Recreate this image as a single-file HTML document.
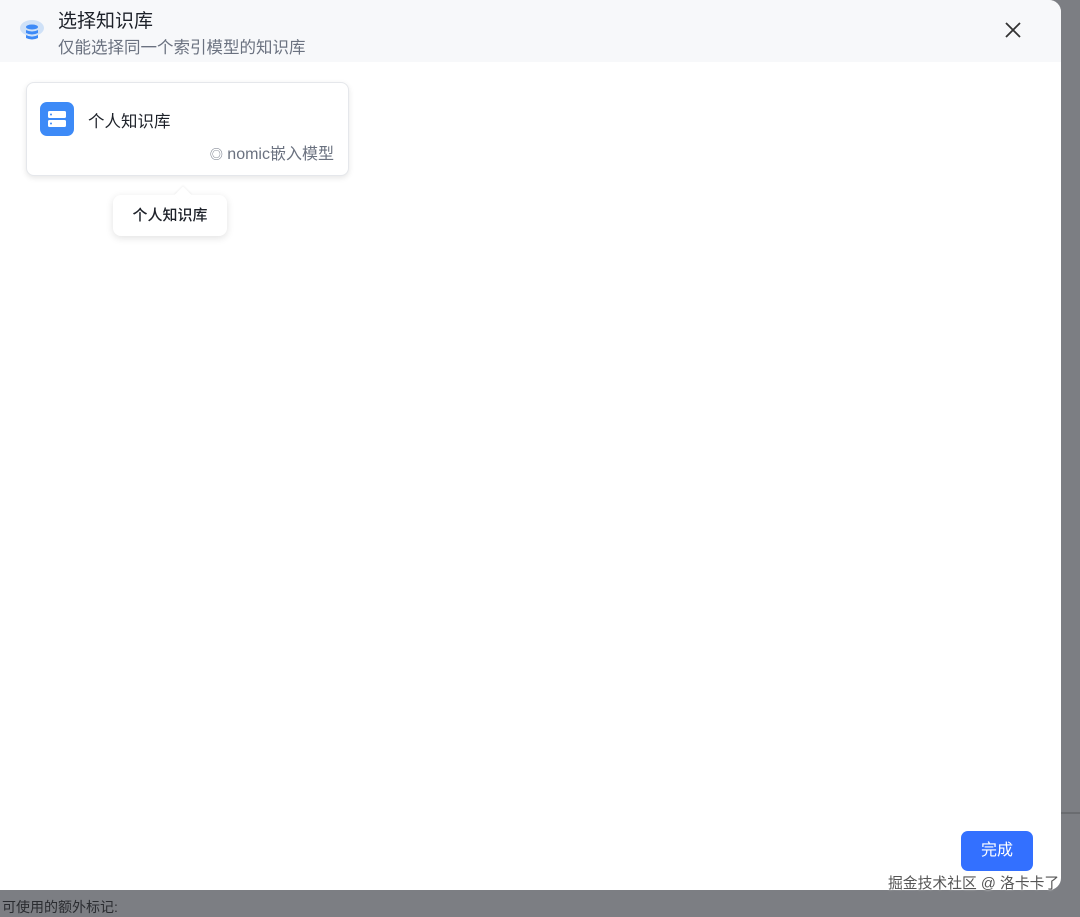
<!DOCTYPE html>
<html><head><meta charset="utf-8"><style>
*{margin:0;padding:0;box-sizing:border-box}
body{width:1080px;height:912px;background:#7c7e83;position:relative;overflow:hidden;font-family:"Liberation Sans","Noto Sans CJK SC",sans-serif}
.modal{position:absolute;left:0;top:0;width:1061px;height:890px;background:#fff;border-radius:0 12px 12px 0;overflow:hidden}
.hdr{position:absolute;left:0;top:0;width:100%;height:62px;background:#f7f8fa}
.t1{position:absolute;left:58px;top:6px;font-size:19px;color:#1d2129}
.t2{position:absolute;left:58px;top:34px;font-size:16.5px;color:#6b7280}
.card{position:absolute;left:26px;top:82px;width:323px;height:94px;border:1px solid #e5e7eb;border-radius:8px;box-shadow:0 2px 6px rgba(0,0,0,.1);background:#fff}
.ic{position:absolute;left:13px;top:19px;width:34px;height:34px;border-radius:7px;background:#3d8af7}
.name{position:absolute;left:61px;top:25px;font-size:16.5px;color:#1d2129}
.model{position:absolute;right:14px;top:57px;font-size:16px;color:#6b7280}
.tip{position:absolute;left:113px;top:195px;width:114px;height:41px;background:#fff;border-radius:8px;box-shadow:0 2px 8px rgba(0,0,0,.12);font-size:15px;color:#1d2129;text-align:center;line-height:41px;font-weight:500}
.tip:before{content:"";position:absolute;left:64px;top:-6px;width:12px;height:12px;background:#fff;transform:rotate(45deg);box-shadow:-1px -1px 2px rgba(0,0,0,.05)}
.btn{position:absolute;left:961px;top:831px;width:72px;height:40px;background:#3370ff;border-radius:7px;color:#fff;font-size:16px;text-align:center;line-height:40px}
.wm{position:absolute;left:888px;top:872px;font-size:14.8px;color:#555;text-shadow:0 0 2px #fff;white-space:nowrap}
.bot{position:absolute;left:2px;top:897px;font-size:14px;color:#2a2c30}
</style></head><body>
<div class="modal">
<div class="hdr">
<svg style="position:absolute;left:19px;top:18px" width="26" height="24" viewBox="0 0 26 24"><ellipse cx="13" cy="10" rx="12" ry="8" fill="#cfe1f7"/><ellipse cx="13" cy="9" rx="6" ry="2.5" fill="#3d8af7"/><path d="M7 12q6 3 12 0v3q-6 3-12 0z" fill="#3d8af7"/><path d="M7 17q6 3 12 0v3q-6 3-12 0z" fill="#3d8af7"/></svg>
<div class="t1">选择知识库</div>
<div class="t2">仅能选择同一个索引模型的知识库</div>
<svg style="position:absolute;left:1005px;top:22px" width="16" height="16" viewBox="0 0 16 16"><path d="M1 1L15 15M15 1L1 15" stroke="#333" stroke-width="1.8"/></svg>
</div>
<div class="card">
<div class="ic"><svg width="34" height="34" viewBox="0 0 34 34"><rect x="8" y="9" width="18" height="7" rx="1.5" fill="#fff"/><rect x="8" y="18" width="18" height="7" rx="1.5" fill="#fff"/><circle cx="11" cy="12.5" r="1" fill="#3d8af7"/><circle cx="11" cy="21.5" r="1" fill="#3d8af7"/></svg></div>
<div class="name">个人知识库</div>
<div class="model"><span style="font-size:13px">◎</span> nomic嵌入模型</div>
</div>
<div class="tip">个人知识库</div>
<div class="btn">完成</div>
</div>
<div class="wm">掘金技术社区 @ 洛卡卡了</div>
<div style="position:absolute;left:1061px;top:812px;width:19px;height:2px;background:#6a6c70"></div>
<div class="bot">可使用的额外标记:</div>
</body></html>
